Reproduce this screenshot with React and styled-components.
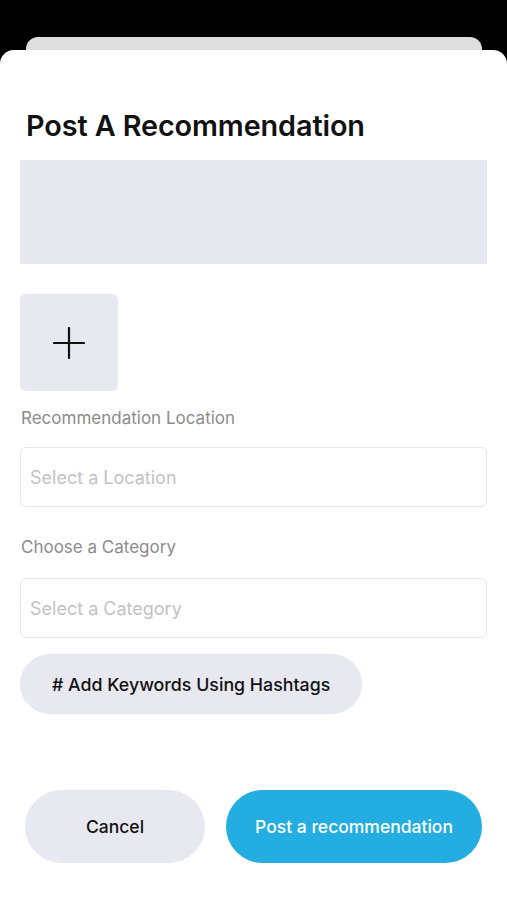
import React from 'react'
import styled, { createGlobalStyle } from 'styled-components'

const GlobalStyle = createGlobalStyle`
    html, body {
        margin: 0;
        padding: 0;
        background: #000;
        font-family: Inter, "Noto Sans", sans-serif;
    }
`

const Screen = styled.div`
    min-height: 900px;
    padding-top: 37px;
    display: flex;
    flex-direction: column;
    box-sizing: border-box;
`

const Peek = styled.div`
    height: 13px;
    margin: 0 25px 0 26px;
    background: #dedede;
    border-radius: 12px 12px 0 0;
`

const Sheet = styled.div`
    flex: 1;
    background: #fff;
    border-radius: 14px 14px 0 0;
    padding: 56px 20px 0 20px;
    display: flex;
    flex-direction: column;
`

const Title = styled.h1`
    margin: 0 0 0 6px;
    font-size: 28.8px;
    line-height: 40px;
    font-weight: 600;
    color: #111;
    letter-spacing: -0.1px;
`

const Banner = styled.div`
    margin-top: 14px;
    height: 104px;
    background: #e7e7ef;
`

const AddPhoto = styled.button`
    margin-top: 30px;
    width: 98px;
    height: 97px;
    border: none;
    border-radius: 6px;
    background: #e8e8f0;
    display: flex;
    align-items: center;
    justify-content: center;
    padding: 0;
`

const Label = styled.div`
    margin-top: ${p => p.$top}px;
    font-size: 17px;
    line-height: 20px;
    color: #8b8b8b;
    padding-left: 1px;
`

const Field = styled.div`
    margin-top: ${p => p.$top}px;
    height: 60px;
    box-sizing: border-box;
    border: 1px solid #e6e6ea;
    border-radius: 6px;
    display: flex;
    align-items: center;
    padding-left: 9px;
    font-size: 18px;
    color: #c2c2c6;
`

const Pill = styled.button`
    margin-top: 16px;
    align-self: flex-start;
    width: 342px;
    height: 60px;
    border: none;
    border-radius: 30px;
    background: #e8e8f0;
    font-family: inherit;
    font-size: 17.8px;
    font-weight: 500;
    color: #111;
    padding: 0;
    text-align: left;
    padding-left: 32px;
`

const Actions = styled.div`
    margin-top: 76px;
    padding: 0 5px;
    display: flex;
    gap: 21px;
`

const ActionButton = styled.button`
    width: ${p => p.$width}px;
    height: 73px;
    border: none;
    border-radius: 37px;
    background: ${p => (p.$primary ? '#23ade0' : '#e8e8f0')};
    color: ${p => (p.$primary ? '#fff' : '#111')};
    font-family: inherit;
    font-size: 17.5px;
    font-weight: 500;
`

export default function App() {
    return (
        <>
            <GlobalStyle />
            <Screen>
                <Peek />
                <Sheet>
                    <Title>Post A Recommendation</Title>
                    <Banner />
                    <AddPhoto aria-label="add photo">
                        <svg width="32" height="32" viewBox="0 0 32 32">
                            <path d="M16 1v30M1 16h30" stroke="#111" strokeWidth="2.2" strokeLinecap="round" />
                        </svg>
                    </AddPhoto>
                    <Label $top={17}>Recommendation Location</Label>
                    <Field $top={19}>Select a Location</Field>
                    <Label $top={30}>Choose a Category</Label>
                    <Field $top={21}>Select a Category</Field>
                    <Pill># Add Keywords Using Hashtags</Pill>
                    <Actions>
                        <ActionButton $width={180}>Cancel</ActionButton>
                        <ActionButton $width={256} $primary>Post a recommendation</ActionButton>
                    </Actions>
                </Sheet>
            </Screen>
        </>
    )
}
